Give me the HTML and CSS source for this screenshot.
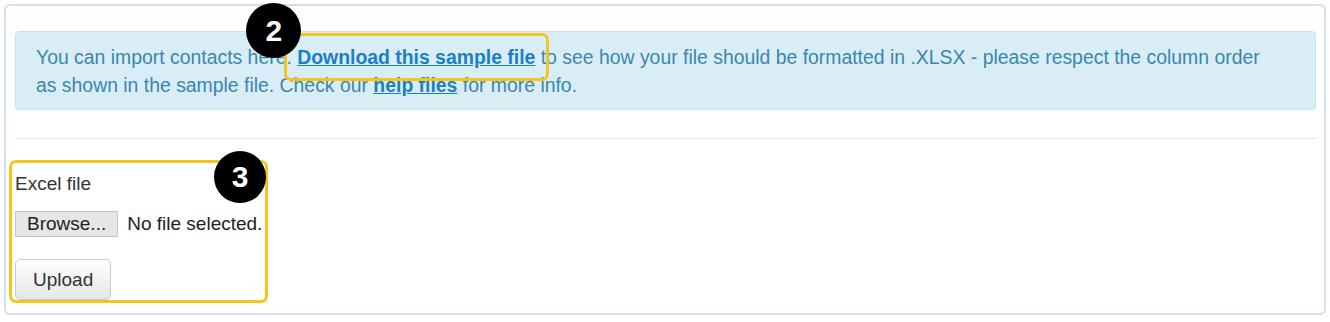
FILE: index.html
```html
<!DOCTYPE html>
<html lang="en">
<head>
    <meta charset="UTF-8">
    <meta name="viewport" content="width=device-width, initial-scale=1.0">
    <title>Import contacts</title>
    <link rel="stylesheet" href="styles.css">
</head>
<body>
    <div class="panel">
        <div class="alert-info">
            You can import contacts here.
            <span class="callout">
                <a href="#" class="alert-link">Download this sample file</a>
                <span class="callout-box callout-box-link"></span>
                <span class="badge badge-two">2</span>
            </span>
            to see how your file should be formatted in .XLSX - please respect the column order as shown in the sample file. Check our <a href="#" class="alert-link">help files</a> for more info.
        </div>
        <div class="divider"></div>
        <form class="upload-form">
            <div class="callout-box callout-box-form"></div>
            <span class="badge badge-three">3</span>
            <label class="field-label" for="excelFile">Excel file</label>
            <div class="file-row">
                <span class="browse-btn">Browse...</span>
                <span class="file-name">No file selected.</span>
            </div>
            <button type="button" class="upload-btn">Upload</button>
        </form>
    </div>
</body>
</html>
```

FILE: styles.css
```css
body {
    margin: 0;
    font-family: "Liberation Sans", Arial, sans-serif;
    font-size: 19px;
    color: #333;
    background: #fff;
}
:root {
    --callout-color: #f6c41f;
}
.panel {
    margin: 4px;
    border: 2px solid #cfe0f6;
    border-radius: 6px;
    padding: 25px 8px 13px 9px;
}
.alert-info {
    border: 1px solid #bce8f1;
    border-radius: 4px;
    background: #d9edf7;
    color: #3a87ad;
    padding: 11px 40px 10px 20px;
    font-size: 19.4px;
    line-height: 28px;
}
.alert-link {
    color: #1a80c6;
    font-weight: bold;
    text-decoration: underline;
}
.callout {
    position: relative;
}
.callout-box {
    position: absolute;
    border: 3px solid var(--callout-color);
    border-radius: 7px;
    pointer-events: none;
}
.callout-box-link {
    left: -13px;
    right: -8px;
    top: -13px;
    bottom: -13px;
}
.badge {
    position: absolute;
    width: 54px;
    height: 54px;
    border-radius: 50%;
    background: #000;
    color: #fff;
    font-weight: bold;
    font-size: 30px;
    display: flex;
    align-items: center;
    justify-content: center;
}
.badge-two {
    left: -51px;
    top: -43px;
    width: 55px;
    height: 55px;
}
.divider {
    margin-top: 28px;
    height: 1px;
    background: #e6e6e6;
}
.upload-form {
    position: relative;
    padding-top: 31px;
}
.callout-box-form {
    left: -6px;
    top: 21px;
    width: 253px;
    bottom: -3px;
}
.badge-three {
    left: 199px;
    top: 12px;
    width: 52px;
    height: 52px;
}
.field-label {
    display: block;
    line-height: 28px;
}
.file-row {
    display: flex;
    align-items: center;
    gap: 9px;
    margin-top: 13px;
}
.browse-btn {
    display: inline-block;
    height: 24px;
    line-height: 24px;
    padding: 0 11px;
    border: 1px solid #c4c4c4;
    background: #e6e6e6;
    color: #222;
}
.file-name {
    line-height: 26px;
    color: #222;
}
.upload-btn {
    display: block;
    margin-top: 22px;
    height: 41px;
    padding: 0 17px;
    font-family: inherit;
    font-size: 19px;
    color: #333;
    border: 1px solid #ccc;
    border-radius: 5px;
    background: linear-gradient(#fff, #e6e6e6);
}
```
